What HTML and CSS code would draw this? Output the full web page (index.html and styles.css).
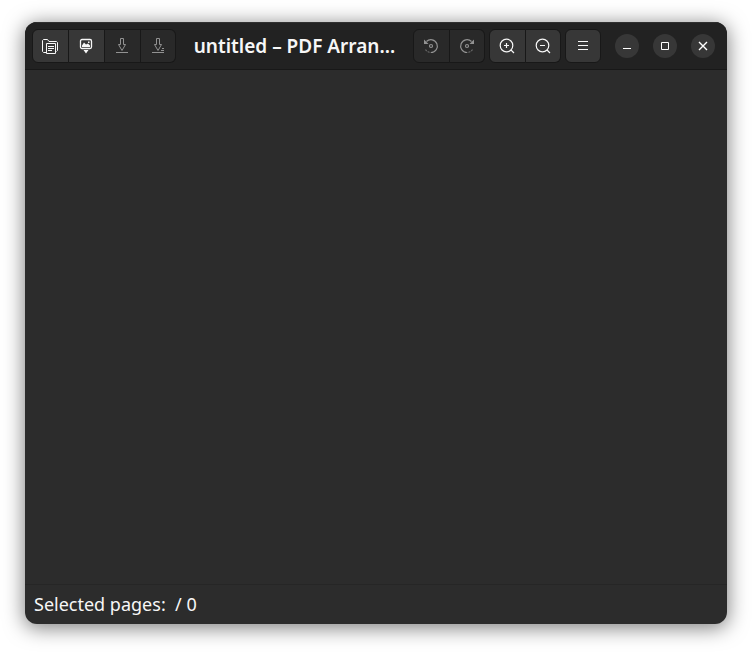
FILE: index.html
```
<!DOCTYPE html>
<html lang="en">
<head>
  <meta charset="UTF-8" />
  <title>untitled – PDF Arranger</title>
  <meta name="viewport" content="width=device-width, initial-scale=1.0" />
  <link rel="stylesheet" href="styles.css">
</head>
<body>

  <div class="window">
    <!-- Header bar -->
    <header class="headerbar">
      <div class="btn-group">
        <button class="btn" type="button" aria-label="Open">
          <svg class="icon" viewBox="0 0 16 16">
            <path d="M4 14.5H1.5l-1-1v-11l1-1h4l1.500 2h7.500l1 1v8l-1 1" />
            <path d="M4.5 5.5h9v10h-9z" />
            <path d="M6 8.5h6M6 10.5h6M6 12.5h4" />
          </svg>
        </button>
        <button class="btn" type="button" aria-label="Import">
          <svg class="icon" viewBox="0 0 16 16">
            <rect x="2.5" y="1.5" width="11" height="9" rx="1.5" stroke-width="1.3" />
            <path class="solid" d="M4 9V7.500l2-3 2 2 2-1 2 2V9zM10 3.500h1.500V5H10zM5.500 12h5L8 15.500z" />
          </svg>
        </button>
        <button class="btn" type="button" aria-label="Save" disabled>
          <svg class="icon" viewBox="0 0 16 16">
            <path d="M6.5 .5h3v6h2l-3.500 6-3.500-6h2z" />
            <path d="M2 14.5h12" />
          </svg>
        </button>
        <button class="btn" type="button" aria-label="Save as" disabled>
          <svg class="icon" viewBox="0 0 16 16">
            <path d="M6.5 .5h3v6h2l-3.500 6-3.500-6h2z" />
            <path d="M2 14.5h12M11 12.5h3M12 10.5h2" />
          </svg>
        </button>
      </div>

      <h1 class="title">untitled – PDF Arran…</h1>

      <div class="btn-group">
        <button class="btn" type="button" aria-label="Rotate left" disabled>
          <svg class="icon" viewBox="0 0 16 16" stroke-width="1.2">
            <path d="M3.5 3.5a6.4 6.4 0 1 1 4.500 11" />
            <path d="M2.5 11.5a6.4 6.4 0 0 0 5.500 3" stroke-dasharray="2 1" opacity=".6" />
            <circle cx="8" cy="8" r="1.5" />
            <path class="solid" d="M1 1.500V6h4.500z" />
          </svg>
        </button>
        <button class="btn" type="button" aria-label="Rotate right" disabled>
          <svg class="icon" viewBox="0 0 16 16" stroke-width="1.2">
            <path d="M12.5 3.5a6.4 6.4 0 1 0-4.500 11" />
            <path d="M13.5 11.5a6.4 6.4 0 0 1-5.500 3" stroke-dasharray="2 1" opacity=".6" />
            <circle cx="8" cy="8" r="1.5" />
            <path class="solid" d="M15 1.500V6h-4.500z" />
          </svg>
        </button>
      </div>

      <div class="btn-group">
        <button class="btn" type="button" aria-label="Zoom in">
          <svg class="icon" viewBox="0 0 16 16" stroke-width="1.2">
            <circle cx="7.5" cy="7.5" r="6.3" />
            <path d="M12 12l3 3M5 7.5h5M7.5 5v5" />
          </svg>
        </button>
        <button class="btn" type="button" aria-label="Zoom out">
          <svg class="icon" viewBox="0 0 16 16" stroke-width="1.2">
            <circle cx="7.5" cy="7.5" r="6.3" />
            <path d="M12 12l3 3M5 7.5h5" />
          </svg>
        </button>
      </div>

      <div class="btn-group">
        <button class="btn" type="button" aria-label="Main menu">
          <svg class="icon" viewBox="0 0 16 16">
            <path d="M3 3.5h10M3 7.5h10M3 11.5h10" />
          </svg>
        </button>
      </div>

      <div class="window-controls">
        <button class="control" type="button" aria-label="Minimize">
          <svg class="icon" viewBox="0 0 16 16"><path d="M4 10.5h8" /></svg>
        </button>
        <button class="control" type="button" aria-label="Maximize">
          <svg class="icon" viewBox="0 0 16 16"><path d="M4.5 4.5h7v7h-7z" /></svg>
        </button>
        <button class="control" type="button" aria-label="Close">
          <svg class="icon" viewBox="0 0 16 16"><path d="M4 4l8 8M12 4l-8 8" stroke-width="1.4" /></svg>
        </button>
      </div>
    </header>

    <!-- Page thumbnails -->
    <main class="pages"></main>

    <footer class="statusbar">Selected pages:&nbsp; / 0</footer>
  </div>

</body>
</html>
```
FILE: styles.css
```
body {
  display: flex;
  box-sizing: border-box;
  min-height: 100vh;
  margin: 0;
  padding: 22px 25px 28px;
  background-color: #fff;
  font-family: "Noto Sans", "Open Sans", sans-serif;
}

.window {
  display: flex;
  flex: 1;
  flex-direction: column;
  min-width: 0;
  overflow: hidden;
  border-radius: 12px;
  background-color: #2c2c2c;
  color: #f7f7f7;
  box-shadow: 0 3px 20px 1px rgba(0, 0, 0, 0.5);
}

/* Header bar */
.headerbar {
  display: flex;
  align-items: center;
  gap: 4px;
  padding: 7px 12px 6px 7px;
  border-bottom: 1px solid #181818;
  background-color: #222;
  box-shadow: inset 0 1px #303030;
}

.title {
  flex: 1;
  min-width: 0;
  margin: 0;
  overflow: hidden;
  font-size: 19px;
  font-weight: 600;
  line-height: 24px;
  text-align: center;
  text-overflow: ellipsis;
  white-space: nowrap;
}

.btn-group {
  display: flex;
}

.btn {
  display: flex;
  align-items: center;
  justify-content: center;
  box-sizing: border-box;
  width: 36px;
  height: 34px;
  padding: 0 1px 0 0;
  border: 1px solid #181818;
  border-left-width: 0;
  background-color: #373737;
  color: #f7f7f7;
}

.btn:first-child {
  width: 37px;
  border-left-width: 1px;
  border-radius: 6px 0 0 6px;
}

.btn:last-child {
  width: 35px;
  padding: 0;
  border-radius: 0 6px 6px 0;
}

.btn:only-child {
  width: 36px;
  border-radius: 6px;
}

.btn:disabled {
  background-color: #292929;
  color: #929292;
}

.icon {
  display: block;
  width: 16px;
  height: 16px;
  fill: none;
  stroke: currentColor;
}

.icon .solid {
  fill: currentColor;
  stroke: none;
}

.window-controls {
  display: flex;
  gap: 14px;
  margin-left: 10px;
}

.control {
  display: flex;
  align-items: center;
  justify-content: center;
  width: 24px;
  height: 24px;
  padding: 0;
  border: none;
  border-radius: 50%;
  background-color: #373737;
  color: #fff;
}

/* Content */
.pages {
  flex: 1;
}

.statusbar {
  padding: 7px 9px 8px;
  border-top: 1px solid #262626;
  font-size: 18px;
  line-height: 24px;
}
```
